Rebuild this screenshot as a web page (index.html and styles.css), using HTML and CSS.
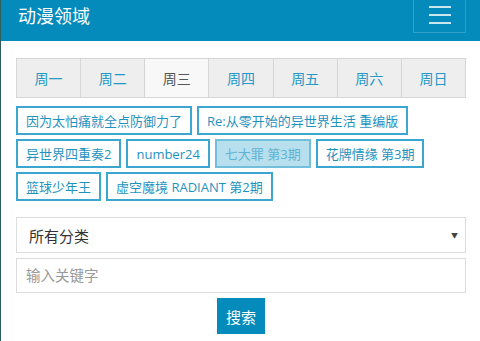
FILE: index.html
```html
<!DOCTYPE html>
<html lang="zh">
<head>
<meta charset="utf-8">
<title>动漫领域</title>
<link rel="stylesheet" href="styles.css">
</head>
<body>
<header class="topbar">
  <div class="brand">动漫领域</div>
  <button class="menu-btn" aria-label="menu">
    <span class="bar"></span><span class="bar"></span><span class="bar"></span>
  </button>
</header>
<main class="content">
  <nav class="days">
    <a class="day">周一</a>
    <a class="day">周二</a>
    <a class="day active">周三</a>
    <a class="day">周四</a>
    <a class="day">周五</a>
    <a class="day">周六</a>
    <a class="day">周日</a>
  </nav>
  <div class="tags">
    <a class="tag">因为太怕痛就全点防御力了</a>
    <a class="tag">Re:从零开始的异世界生活 重编版</a>
    <a class="tag">异世界四重奏2</a>
    <a class="tag">number24</a>
    <a class="tag active">七大罪 第3期</a>
    <a class="tag">花牌情缘 第3期</a>
    <a class="tag">篮球少年王</a>
    <a class="tag">虚空魔境 RADIANT 第2期</a>
  </div>
  <form class="search">
    <div class="select"><span>所有分类</span><span class="caret">▼</span></div>
    <input class="keyword" type="text" placeholder="输入关键字">
    <div class="actions"><button class="submit" type="button">搜索</button></div>
  </form>
</main>
</body>
</html>
```
FILE: styles.css
```css
* { box-sizing: border-box; }
html, body { height: 100%; }
body {
  margin: 0;
  border-left: 1px solid #2c5d5a;
  background: #fff;
  font-family: "Open Sans", "Noto Sans CJK SC", sans-serif;
  overflow: hidden;
}
.topbar {
  height: 41px;
  background: #058bbb;
  display: flex;
  justify-content: space-between;
  align-items: flex-end;
  padding: 0 14px 8px 17px;
}
.brand {
  color: #fff;
  font-size: 18px;
  line-height: 30px;
  align-self: center;
  margin-bottom: 2px;
}
.menu-btn {
  width: 53px;
  height: 36px;
  background: transparent;
  border: 1px solid rgba(255,255,255,0.18);
  border-top: 0;
  display: flex;
  flex-direction: column;
  align-items: center;
  justify-content: center;
  gap: 6px;
  padding: 0;
}
.bar {
  display: block;
  width: 22px;
  height: 2px;
  background: #c9e6f1;
}
.content {
  padding: 17px 14px 0 15px;
}
.days {
  display: flex;
  border: 1px solid #d6d6d6;
}
.day {
  flex: 1;
  height: 38px;
  display: flex;
  align-items: center;
  justify-content: center;
  background: #eeeeee;
  color: #2499c6;
  font-size: 14px;
  border-left: 1px solid #d6d6d6;
}
.day:first-child { border-left: 0; }
.day.active { background: #f8f8f8; color: #555; }
.tags {
  display: flex;
  flex-wrap: wrap;
  gap: 4px 5px;
  margin-top: 8px;
}
.tag {
  height: 29px;
  display: flex;
  align-items: center;
  padding: 0 8px;
  border: 2px solid #3ba7d0;
  color: #1f93c0;
  font-size: 13px;
  white-space: nowrap;
}
.tag.active {
  background: #b8dfee;
  color: #5eb3d3;
  border-color: #72bfdb;
}
.search {
  margin-top: 16px;
  display: flex;
  flex-direction: column;
  gap: 5px;
}
.select {
  height: 36px;
  border: 1px solid #dcdcdc;
  display: flex;
  align-items: center;
  justify-content: space-between;
  padding: 0 7px 0 12px;
  color: #333;
  font-size: 15px;
}
.caret { font-size: 7px; color: #444; }
.keyword {
  height: 35px;
  border: 1px solid #dcdcdc;
  padding: 0 9px;
  font-family: inherit;
  font-size: 14.5px;
  outline: none;
}
.keyword::placeholder { color: #999; }
.actions { display: flex; justify-content: center; }
.submit {
  width: 48px;
  height: 36px;
  background: #058bbb;
  color: #fff;
  border: 0;
  font-family: inherit;
  font-size: 15px;
  padding: 0;
}
```
